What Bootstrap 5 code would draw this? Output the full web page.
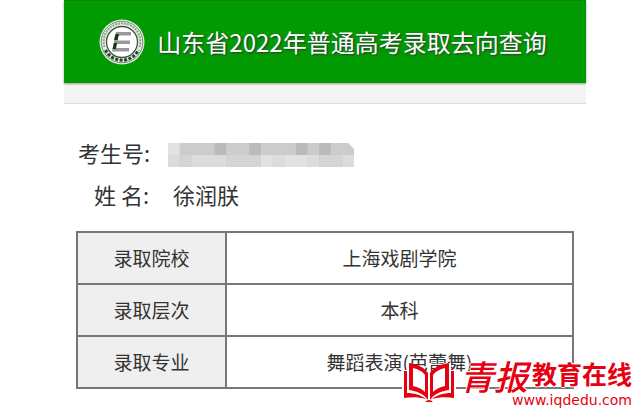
<!DOCTYPE html>
<html lang="zh-CN">
<head>
<meta charset="utf-8">
<meta name="viewport" content="width=device-width, initial-scale=1">
<title>山东省2022年普通高考录取去向查询</title>
<link href="https://cdn.jsdelivr.net/npm/bootstrap@5.3.0/dist/css/bootstrap.min.css" rel="stylesheet">
<style>
  body { font-family: "Noto Sans CJK SC", sans-serif; color: #333; }
  .sheet { margin: 0 54px 0 64px; }
  .topbar { background: #029a02; border-top: 1px solid #0b820b; min-height: 83px; padding-right: 4px; box-shadow: 0 1px 2px #999; position: relative; }
  .seal { width: 46px; height: 46px; }
  .topbar h1 { font-size: 24px; line-height: 36px; color: #fff; font-weight: 400; text-shadow: 1px 1px 2px #333; }
  .strip { background: #f4f4f4; height: 21px; border-bottom: 1px solid #ddd; }
  .details { padding: 32px 12px 0; }
  .info { font-size: 22px; line-height: 32px; padding-left: 2px; }
  .info + .info { margin-top: 10px; padding-left: 18px; }
  .mosaic { margin: 6px 0 0 18px; }
  .result { border: 2px solid #777; font-size: 19px; line-height: 28px; margin-top: 21px; }
  .result th, .result td { border: 2px solid #777; padding: 11px 8px; font-weight: 400; text-align: center; color: #333; }
  .result th { width: 30%; background: #efefef; }
  .brand { position: absolute; right: 8px; top: 359px; }
  .brand, .brand a { color: #e60012; }
  .brush { font-size: 34px; line-height: 34px; font-style: italic; font-weight: 500; }
  .channel { font-size: 25px; line-height: 28px; font-weight: 700; }
  .site { font-family: "DejaVu Sans", sans-serif; font-size: 14px; line-height: 14px; }
  .halo { text-shadow: 1px 0 0 #fff, -1px 0 0 #fff, 0 1px 0 #fff, 0 -1px 0 #fff; }
</style>
</head>
<body class="bg-white">
<main class="sheet">
  <header class="topbar d-flex align-items-center justify-content-center gap-2">
    <svg class="seal me-1" viewBox="0 0 46 46" aria-hidden="true">
      <circle cx="23" cy="23" r="22.5" fill="#e6eee6"/>
      <circle cx="23" cy="23" r="20.8" fill="none" stroke="#587458" stroke-width=".8"/>
      <path d="M5.500 28A18.300 18.300 0 1 1 40.500 28" fill="none" stroke="#8ba08b" stroke-width="2" stroke-dasharray="2 1"/>
      <path d="M6.500 31A18.400 18.400 0 0 0 39.500 31" fill="none" stroke="#244524" stroke-width="3" stroke-dasharray="3 1.500"/>
      <circle cx="23" cy="23" r="15.500" fill="#fff" stroke="#3b563b" stroke-width="1.300"/>
      <path d="M17 13H32V16.500H19.500L18.500 21.500H31V25H17.500L16.500 29H30V32.500H13Z" fill="#999"/>
      <path d="M16.500 15H20L18.500 21H15ZM15 24H18L17 30H13.500Z" fill="#143a14"/>
    </svg>
    <h1 class="m-0">山东省2022年普通高考录取去向查询</h1>
  </header>
  <div class="strip"></div>

  <section class="details">
    <div class="info d-flex align-items-center">
      <span>考生号:</span>
      <svg class="mosaic" width="186" height="24" viewBox="0 0 16 2" preserveAspectRatio="none" role="img" aria-label="已隐藏">
        <path fill="#ccc" d="M0 0H15.500L16 .5V2H0Z"/>
        <path fill="#e2e2e2" d="M0 0H1V1H0ZM8 1H9V2H8ZM10 1H12V2H10Z"/>
        <path fill="#bababa" d="M4 0H5V1H4ZM7 0H8V1H7ZM11 0H12V1H11ZM13 0H14V1H13Z"/>
        <path fill="#dcdcdc" d="M0 1H1V2H0ZM2 1H5V2H2ZM9 1H10V2H9ZM12 1H13V2H12ZM15 1H16V2H15Z"/>
        <path fill="#d4d4d4" d="M1 1H2V2H1ZM5 1H8V2H5ZM13 1H15V2H13Z"/>
      </svg>
    </div>
    <div class="info d-flex gap-4"><span>姓 名:</span><span>徐润朕</span></div>
    <table class="result w-100">
      <tbody>
        <tr><th scope="row">录取院校</th><td>上海戏剧学院</td></tr>
        <tr><th scope="row">录取层次</th><td>本科</td></tr>
        <tr><th scope="row">录取专业</th><td>舞蹈表演(芭蕾舞)</td></tr>
      </tbody>
    </table>
  </section>
</main>

<aside class="brand d-flex align-items-start gap-1">
  <svg width="54" height="46" viewBox="0 0 54 46" aria-hidden="true">
    <path d="M0 11H5V3L27 14L49 3V11H54V42L33 43L27 46L21 43L0 42Z" fill="#fff"/>
    <path fill="#e60012" fill-rule="evenodd" d="M7 4C15 5 22 8 26 14V41C22 35 15 32 7 31ZM11 9V27C16 28 20 30 23 33V16C20 12 16 10 11 9Z"/>
    <path fill="#e60012" fill-rule="evenodd" d="M47 4C39 5 32 8 28 14V41C32 35 39 32 47 31ZM43 9V27C38 28 34 30 31 33V16C34 12 38 10 43 9Z"/>
    <path fill="#e60012" d="M2 12H5V34C12 34 19 36 24 40C17 38 9 38 2 39ZM52 12H49V34C42 34 35 36 30 40C37 38 45 38 52 39ZM23 43Q27 39 31 43Z"/>
  </svg>
  <div class="d-flex flex-column align-items-end">
    <div class="d-flex align-items-start gap-1">
      <span class="brush halo">青报</span>
      <span class="channel halo">教育在线</span>
    </div>
    <a class="site halo text-decoration-none" href="#">www.iqdedu.com</a>
  </div>
</aside>
<script src="https://cdn.jsdelivr.net/npm/bootstrap@5.3.0/dist/js/bootstrap.bundle.min.js"></script>
</body>
</html>
